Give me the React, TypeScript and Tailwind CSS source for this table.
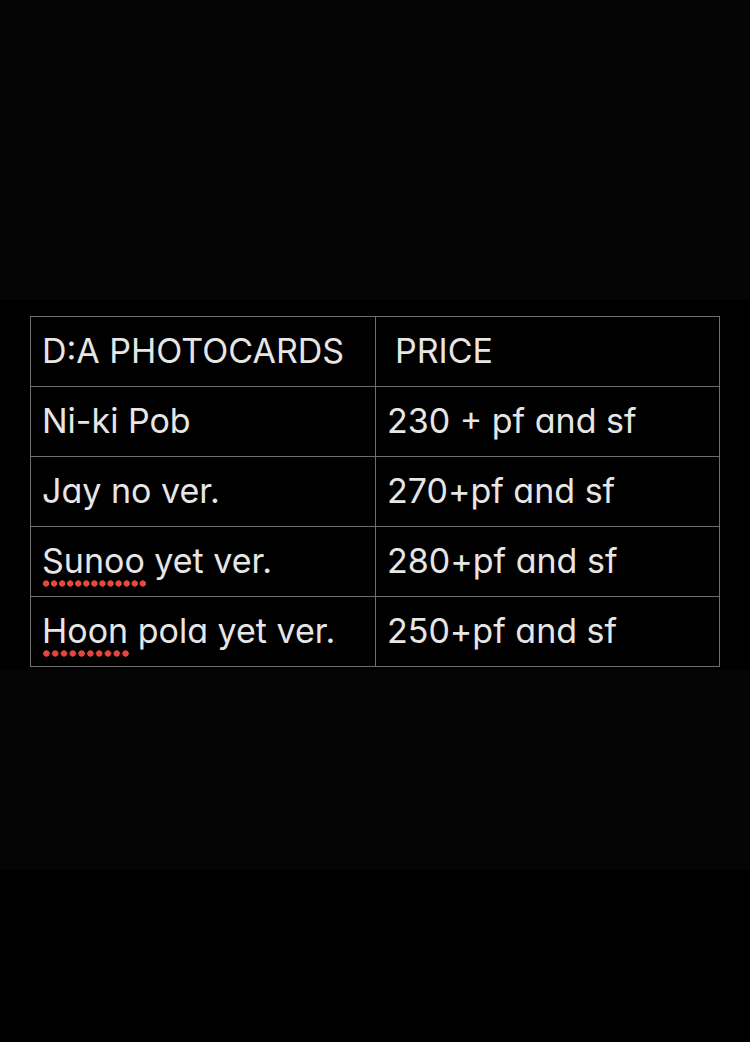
const rows = [
  { name: "Ni-ki Pob", price: "230 + pf and sf" },
  { name: "Jay no ver.", price: "270+pf and sf" },
  { name: "Sunoo yet ver.", price: "280+pf and sf", flagged: "Sunoo", rest: " yet ver." },
  { name: "Hoon pola yet ver.", price: "250+pf and sf", flagged: "Hoon", rest: " pola yet ver." },
];

// red dotted "spell check" underline
function Flagged({ word }: { word: string }) {
  return (
    <span className="relative inline-block">
      {word}
      <span className="absolute left-0 right-[-2px] -bottom-[9px] h-[7px] bg-[radial-gradient(circle,#e8463c_2.9px,transparent_3.4px)] bg-[length:8.4px_7px] bg-repeat-round" />
    </span>
  );
}

export default function App() {
  return (
    <div className="h-[1042px] w-[750px] bg-black font-['Inter','Liberation_Sans',sans-serif] [font-feature-settings:'cv11'] text-[#e6e6e6]">
      <div className="h-[300px] bg-[#050505]" />
      <div className="bg-black px-[30px] pt-[16px] pb-[3px]">
        <table className="w-[690px] border-collapse table-fixed text-[34px] leading-none">
          <tbody>
            <tr className="h-[70px]">
              <td className="border border-[#6e6e6e] pl-[11px] pb-[2px] w-[345px]">D:A PHOTOCARDS</td>
              <td className="border border-[#6e6e6e] pl-[19px] pb-[2px]">PRICE</td>
            </tr>
            {rows.map((r) => (
              <tr key={r.name} className="h-[70px]">
                <td className="border border-[#6e6e6e] pl-[11px] pb-[2px]">
                  {r.flagged ? (
                    <>
                      <Flagged word={r.flagged} />
                      {r.rest}
                    </>
                  ) : (
                    r.name
                  )}
                </td>
                <td className="border border-[#6e6e6e] pl-[11px] pb-[2px]">{r.price}</td>
              </tr>
            ))}
          </tbody>
        </table>
      </div>
      <div className="h-[200px] bg-[#050505]" />
    </div>
  );
}
